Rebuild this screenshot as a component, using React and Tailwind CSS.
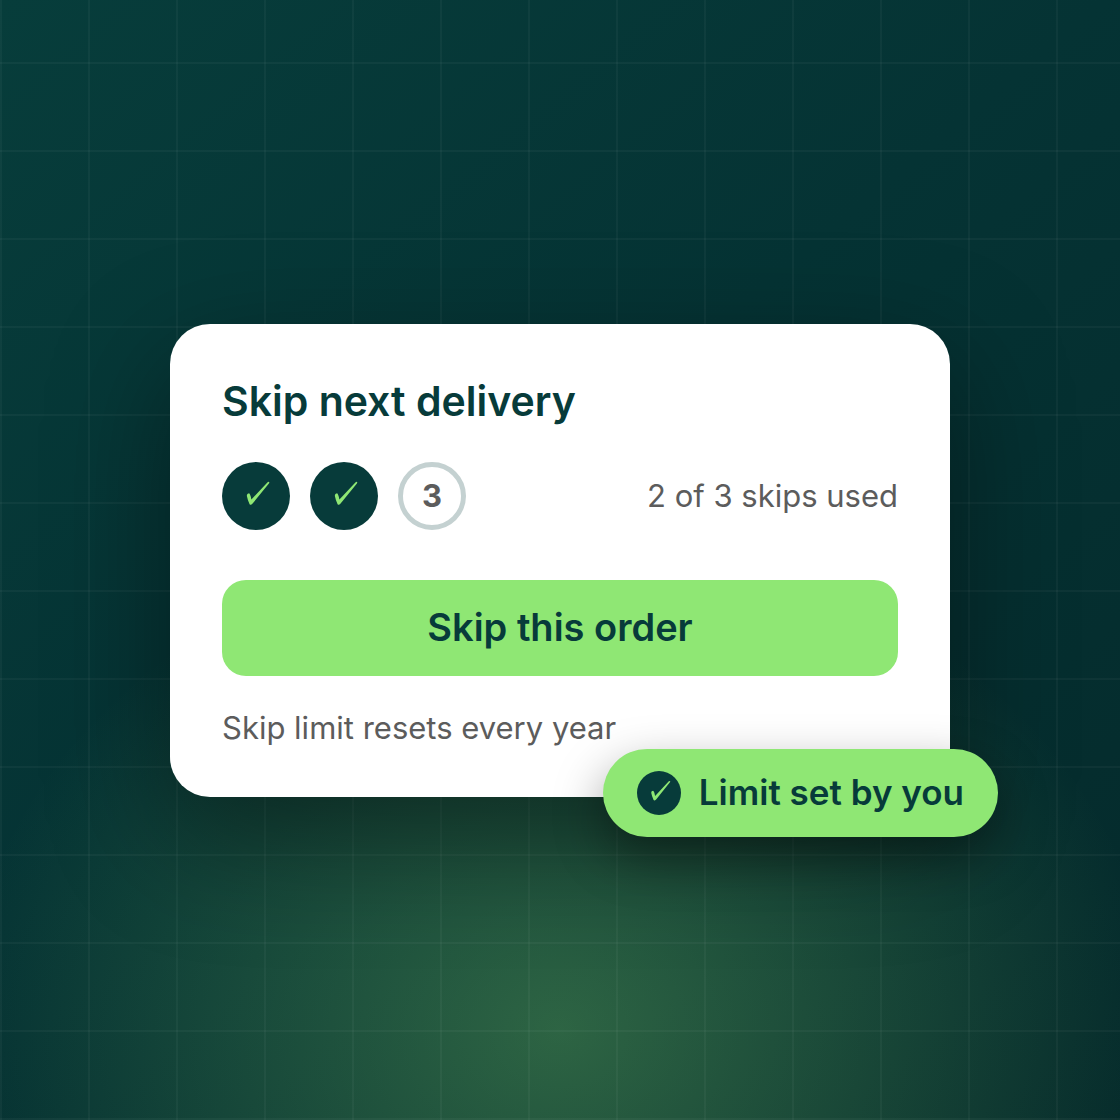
const TOTAL_SKIPS = 3;
const usedSkips = 2;

function CheckMark({ className }) {
  return (
    <svg viewBox="8 8 52 52" fill="currentColor" className={className} aria-hidden="true">
      <path d="M24.8 33.8Q24.8 31.4 27 31.3Q28.2 31.5 29.4 37.4L45.6 20.2Q46.6 19.5 47.2 20Q47.5 20.5 46.9 21.4L30.6 41.6Q28.6 43.6 27.6 42.2Q25.4 37.4 24.8 33.8Z" />
    </svg>
  );
}

function SkipMarker({ number, used }) {
  if (used) {
    return (
      <li
        aria-label={`Skip ${number} used`}
        className="flex size-17 items-center justify-center rounded-full bg-[#073b3a] text-[#8fe774]"
      >
        <CheckMark className="size-13" />
      </li>
    );
  }

  return (
    <li className="flex size-17 items-center justify-center rounded-full border-5 border-[#c4d1d1] text-[31px] leading-none font-bold text-[#5c5c5c]">
      {number}
    </li>
  );
}

export default function App() {
  const markers = Array.from({ length: TOTAL_SKIPS }, (_, i) => i + 1);

  return (
    <div className="min-h-screen bg-[radial-gradient(ellipse_600px_500px_at_50%_92%,rgba(144,232,116,0.29),transparent),linear-gradient(140deg,#073d3b_0%,#053334_45%,#052a2b_100%)] font-['Inter',sans-serif]">
      {/* Grid lines over the gradient */}
      <div className="flex min-h-screen items-center justify-center bg-[linear-gradient(0deg,rgba(255,255,255,0.035)_2px,transparent_2px),linear-gradient(90deg,rgba(255,255,255,0.035)_2px,transparent_2px)] bg-[size:88px_88px] bg-left-bottom px-12 py-16">
        <main className="relative w-full max-w-[780px] rounded-[40px] bg-white p-13 shadow-[0_40px_120px_rgba(0,0,0,0.4)]">
          <h1 className="text-[41px] leading-[50px] font-semibold text-[#073b3a]">
            Skip next delivery
          </h1>

          <div className="mt-9 flex items-center justify-between">
            <ul className="flex gap-5">
              {markers.map((n) => (
                <SkipMarker key={n} number={n} used={n <= usedSkips} />
              ))}
            </ul>
            <p className="text-[31px] leading-[35px] text-[#5c5c5c]">
              {usedSkips} of {TOTAL_SKIPS} skips used
            </p>
          </div>

          <button
            type="button"
            className="mt-[50px] h-24 w-full cursor-pointer rounded-3xl bg-[#8fe774] text-[38px] font-semibold text-[#073b3a]"
          >
            Skip this order
          </button>

          <p className="mt-[34px] text-[31px] leading-[35px] text-[#5c5c5c]">
            Skip limit resets every year
          </p>

          {/* Badge hanging off the card corner */}
          <div className="absolute -right-12 -bottom-10 flex h-22 items-center gap-[18px] rounded-full bg-[#8fe774] px-[34px] shadow-[0_20px_50px_rgba(0,0,0,0.4)]">
            <span className="flex size-11 items-center justify-center rounded-full bg-[#073b3a] text-[#8fe774]">
              <CheckMark className="size-11" />
            </span>
            <span className="text-[35px] font-semibold whitespace-nowrap text-[#073b3a]">
              Limit set by you
            </span>
          </div>
        </main>
      </div>
    </div>
  );
}
